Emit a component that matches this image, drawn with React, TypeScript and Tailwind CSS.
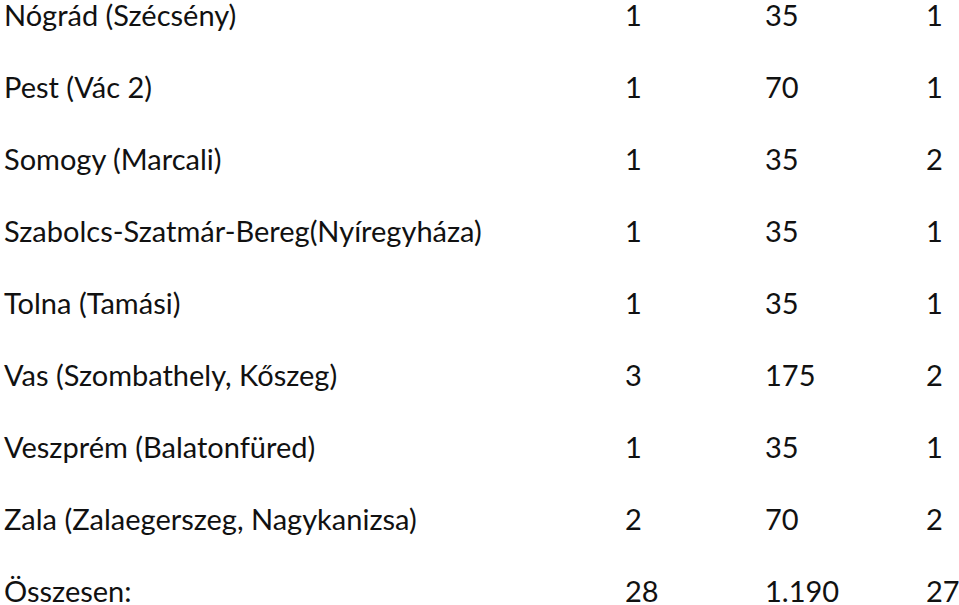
const ROWS: [string, string, string, string][] = [
  ["Nógrád (Szécsény)", "1", "35", "1"],
  ["Pest (Vác 2)", "1", "70", "1"],
  ["Somogy (Marcali)", "1", "35", "2"],
  ["Szabolcs-Szatmár-Bereg(Nyíregyháza)", "1", "35", "1"],
  ["Tolna (Tamási)", "1", "35", "1"],
  ["Vas (Szombathely, Kőszeg)", "3", "175", "2"],
  ["Veszprém (Balatonfüred)", "1", "35", "1"],
  ["Zala (Zalaegerszeg, Nagykanizsa)", "2", "70", "2"],
  ["Összesen:", "28", "1.190", "27"],
];

export default function App() {
  return (
    <div className="w-[959px] h-[605px] overflow-hidden bg-white text-[#111] font-['Lato',sans-serif] text-[29px] leading-[29px]">
      <div className="flex flex-col gap-[43px]">
        {ROWS.map((r) => (
          <div key={r[0]} className="grid grid-cols-[621px_140px_161px_1fr] pl-[4px]">
            <div>{r[0]}</div>
            <div>{r[1]}</div>
            <div>{r[2]}</div>
            <div>{r[3]}</div>
          </div>
        ))}
      </div>
    </div>
  );
}
